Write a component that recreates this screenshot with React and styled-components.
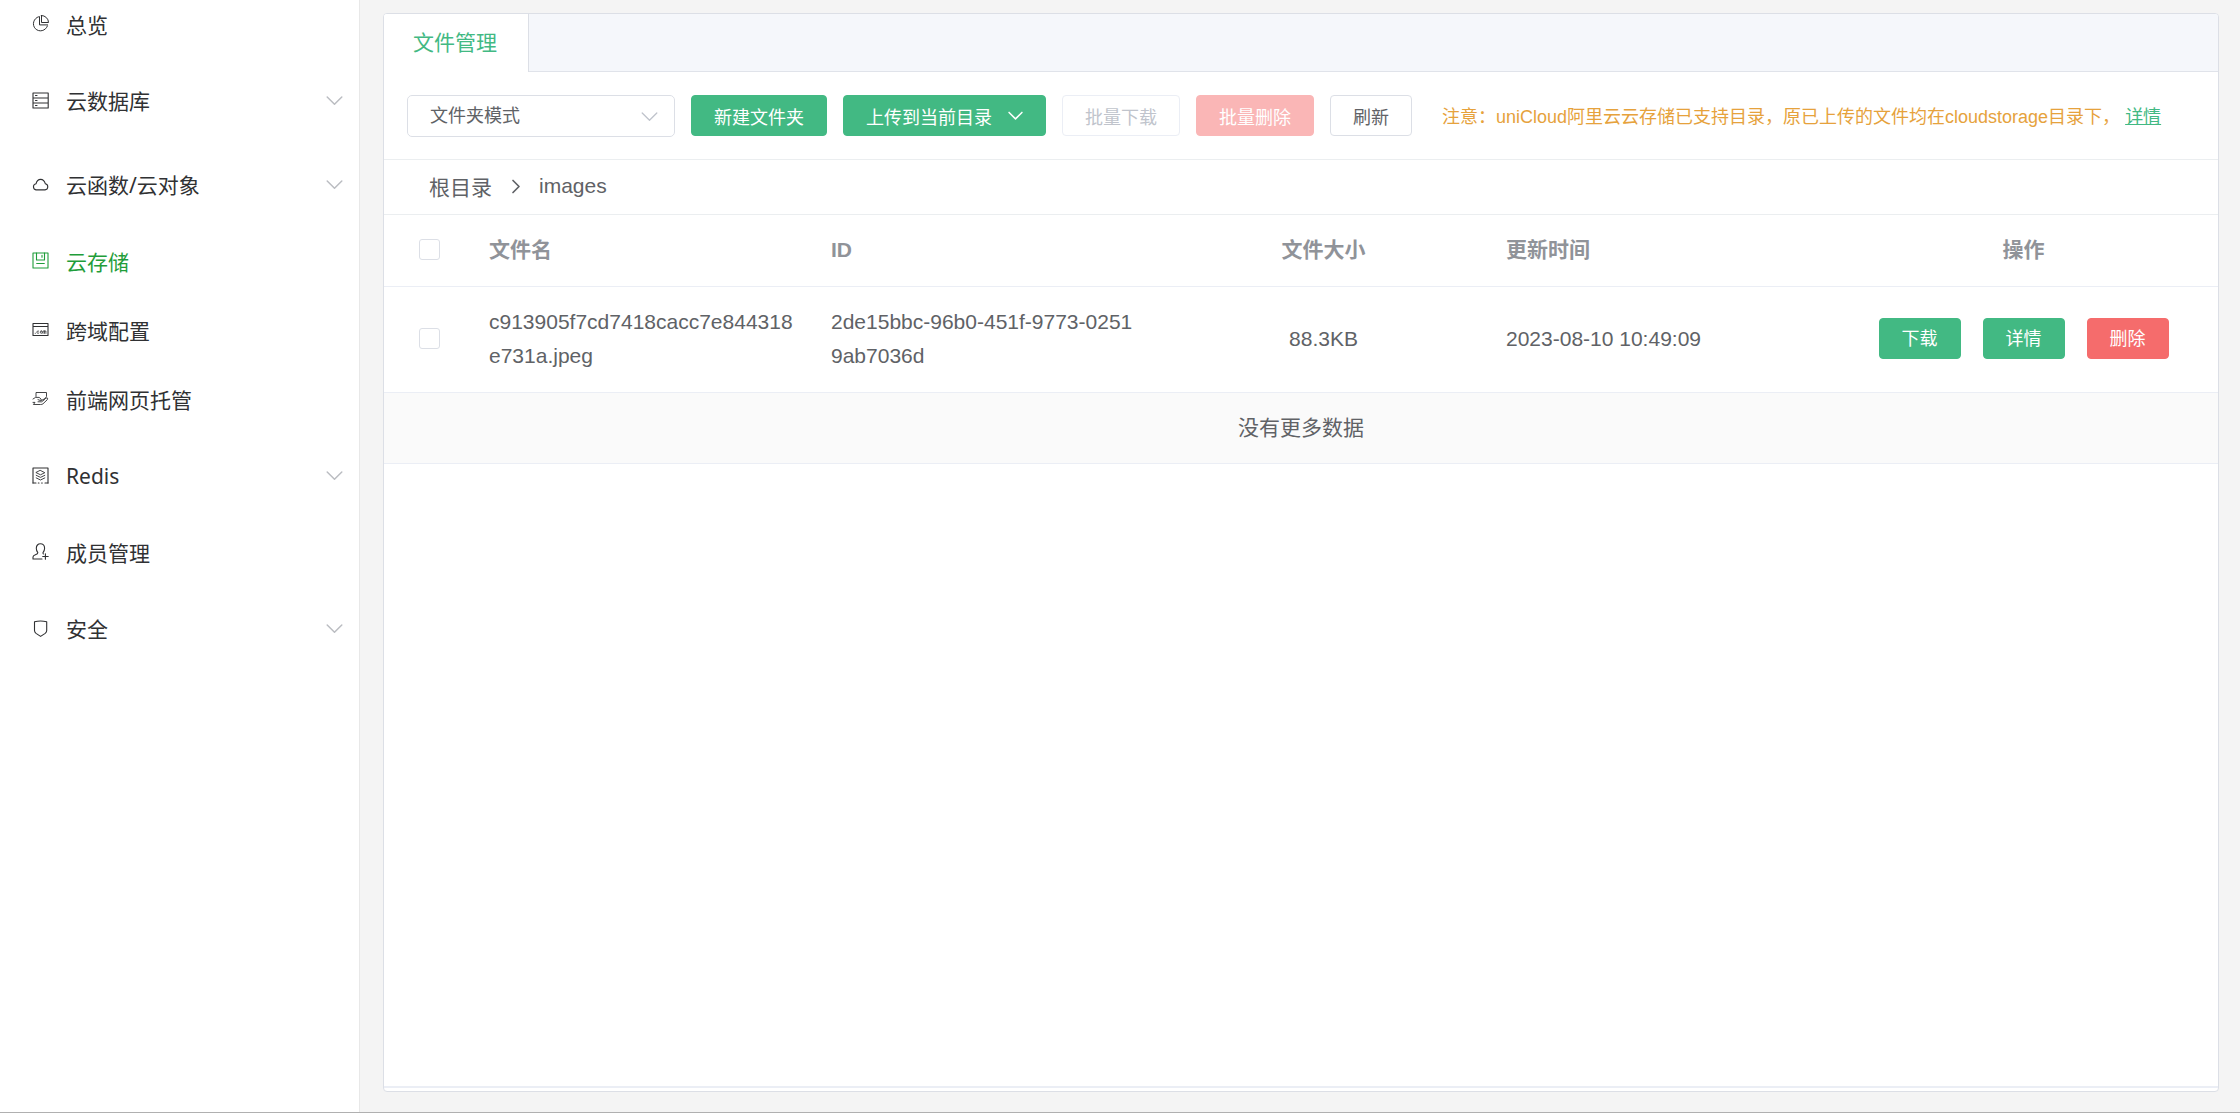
import { useState } from 'react';
import styled, { createGlobalStyle, css } from 'styled-components';

const GlobalStyle = createGlobalStyle`
* {
    box-sizing: border-box;
}
body {
    margin: 0;
    color: #606266;
    background-color: #F4F4F4;
    font-family: "Liberation Sans", "Noto Sans CJK SC", sans-serif;
    font-size: 21px;
}
button, input, select {
    font: inherit;
}
`;

const Layout = styled.div`
display: flex;
min-height: 100vh;
border-bottom: 1px solid #B0B0B0;
`;

const Sidebar = styled.aside`
flex: 0 0 360px;
overflow: hidden;
background-color: white;
border-right: 1px solid #E8E8E8;
font-family: "Noto Sans", "Noto Sans CJK SC", sans-serif;

nav {
    margin-top: -11px;
}
`;

const menuRow = css`
width: 100%;
padding: 0 16px 0 32px;
border: 0;
background: none;
color: ${(p) => (p.$active ? "#1F9D3A" : "#303133")};
display: flex;
align-items: center;
gap: 17px;
text-align: left;
text-decoration: none;
line-height: 30px;
cursor: pointer;

span {
    flex: 1;
    padding-top: 2px;
}
`;

const MenuLink = styled.a`
${menuRow}
height: 69px;
`;

const MenuGroup = styled.button`
${menuRow}
height: 84px;
`;

const Icon = styled.svg`
flex: none;
width: ${(p) => p.$size || 17}px;
height: ${(p) => p.$size || 17}px;
fill: none;
stroke: currentColor;
stroke-width: ${(p) => p.$stroke || 1.1};
stroke-linecap: round;
stroke-linejoin: round;
`;

const Arrow = styled(Icon)`
color: ${(p) => p.$color || "#C0C4CC"};
`;

const Main = styled.main`
flex: 1;
min-width: 0;
padding: 13px 21px 20px 23px;
display: flex;
`;

const Panel = styled.section`
flex: 1;
min-width: 0;
padding-bottom: 3px;
background-color: white;
border: 1px solid #DCDFE6;
border-radius: 4px;
display: flex;
flex-direction: column;
overflow: hidden;
`;

const TabBar = styled.div`
height: 58px;
background-color: #F5F7FB;
border-bottom: 1px solid #E0E3EA;
display: flex;
`;

const Tab = styled.button`
height: 58px;
padding: 0 31px 4px 29px;
border: 0;
border-right: 1px solid #DCDFE6;
background-color: white;
color: #42B983;
cursor: pointer;
`;

const Content = styled.div`
flex: 1;
border-bottom: 2px solid #EBEEF5;
`;

const Toolbar = styled.div`
min-height: 88px;
padding: 0 23px;
border-bottom: 1px solid #EBEEF0;
display: flex;
flex-wrap: wrap;
align-items: center;
gap: 16px;
font-size: 18px;
`;

const SelectBox = styled.div`
position: relative;
width: 268px;
height: 42px;

select {
    width: 100%;
    height: 100%;
    padding: 0 48px 0 22px;
    appearance: none;
    border: 1px solid #DCDFE6;
    border-radius: 5px;
    background-color: white;
    color: #606266;
}
svg {
    position: absolute;
    right: 17px;
    top: 13px;
    pointer-events: none;
}
`;

const tones = {
    plain: ["white", "#606266", "#DCDFE6"],
    success: ["#42B983", "white", "#42B983"],
    danger: ["#F56C6C", "white", "#F56C6C"],
    plainOff: ["white", "#C0C4CC", "#EBEEF5"],
    dangerOff: ["#FAB6B6", "white", "#FAB6B6"],
};

const Button = styled.button`
height: 41px;
padding: 0 22px;
border-radius: 4px;
background-color: ${(p) => tones[p.$tone][0]};
color: ${(p) => tones[p.$tone][1]};
border: 1px solid ${(p) => tones[p.$tone][2]};
display: flex;
align-items: center;
gap: 16px;
font-size: 18px;
white-space: nowrap;
cursor: pointer;

&:disabled {
    cursor: not-allowed;
}
`;

const Notice = styled.p`
margin: 0 0 0 14px;
padding-bottom: 2px;
color: #E6A23C;

a {
    color: #42B983;
}
`;

const Breadcrumb = styled.nav`
height: 55px;
padding: 0 45px 2px;
border-bottom: 1px solid #EBEEF0;
display: flex;
align-items: center;
gap: 15px;

a {
    color: inherit;
    text-decoration: none;
}
`;

const FileTable = styled.table`
width: 100%;
table-layout: fixed;
border-collapse: separate;
border-spacing: 0;

th, td {
    padding: 0 15px 2px;
    border-bottom: 1px solid #EBEEF5;
    text-align: left;
    line-height: 34px;
    word-break: break-all;
}
th {
    height: 72px;
    color: #909399;
    font-weight: 700;
}
td {
    height: 106px;
}
.center { text-align: center; }
.empty {
    height: 71px;
    padding-bottom: 0;
    background-color: #FAFAFA;
    text-align: center;
}
`;

const Checkbox = styled.input`
display: block;
width: 21px;
height: 21px;
margin: 0 auto;
appearance: none;
background-color: white;
border: 1px solid #DCDFE6;
border-radius: 3px;

&:checked {
    background-color: #42B983;
    border-color: #42B983;
}
`;

const Actions = styled.div`
display: flex;
justify-content: center;
gap: 22px;
`;

const icons = {
    overview: (
        <>
            <path strokeWidth="1" d="M6.5 1.8A7.2 7.2 0 1 0 15.4 11" />
            <path strokeWidth="1" d="M9.5 .5V7.5H16.5A7 7 0 0 0 9.5 .5Z" />
            <path strokeWidth="1" d="M7.5 1.7V9.9H15.6" />
        </>
    ),
    database: (
        <>
            <path d="M1 1H16.2V16H1ZM1 6H16.2M1 11H16.2" />
            <path d="M3.5 3.5H5M3.5 8.5H5M3.5 13.5H5" />
        </>
    ),
    cloud: <path d="M4 13.9H13A3.1 3.1 0 0 0 13.4 7.8C12.6 5.3 11 3.4 8.7 3.4C6.3 3.4 4.6 5.4 4 7.8A3.1 3.1 0 0 0 4 13.9Z" />,
    storage: (
        <>
            <path d="M1 1H16V16H1Z" />
            <path d="M4.5 1V8H12.5V1M10 3.3V5.3M4.7 11.5H12.3" />
        </>
    ),
    domain: (
        <>
            <path d="M1 2.5H16V14.5H1ZM1 5.5H16" />
            <path strokeWidth="0.8" d="M3.2 12.3H3.4M6.6 10Q4.8 9.6 4.8 11.2Q4.8 12.7 6.6 12.2M9.3 9.9A1.1 1.2 0 1 0 9.3 12.3A1.1 1.2 0 1 0 9.3 9.9M11 12.4V10H13.9V12.4M12.5 10V12.4" />
        </>
    ),
    hosting: (
        <>
            <path strokeWidth="0.9" d="M4 6.5V2.5H14.5V6.5L12.8 9" />
            <path strokeWidth="0.9" d="M1 9L3.6 7.4H7.2L9.2 9.2Q9.8 10.7 8 10.4L6 9.6M9.5 10.4L14.2 8Q16.5 7.6 15.4 9.6L11 13.8Q10 14.6 8.6 14.5H1.4L3 12.4H1" />
            <path strokeWidth="0.9" d="M6 11.8H9.6L12.5 9.6" />
        </>
    ),
    redis: (
        <>
            <path d="M1 16V1H16V16" />
            <path d="M1 16H4M6.3 16H7M9.6 16H10.3M13 16H16" />
            <path strokeWidth="0.9" d="M8.5 3.5L12.8 5.7L8.5 7.8L4.2 5.7ZM4.2 8.3L8.5 10.4L12.8 8.3M4.2 10.9L8.5 13L12.8 10.9" />
        </>
    ),
    members: (
        <>
            <path d="M10 16H1V14Q1 12.6 3.4 11.7Q5.8 11 5.8 9.7Q4.3 7.7 4.3 5.3C4.3 2.5 6 .8 8.4 .8S12.6 2.5 12.6 5.3Q12.6 7.7 11 9.7Q10.8 10.6 11.4 11" />
            <path d="M13.4 10.8V16.2M10.7 13.5H16.2" />
        </>
    ),
    security: <path d="M2.5 1.8Q8.5 .2 14.7 1.8V10.5Q14.7 12.3 13.2 13.4L8.6 16.4L4 13.4Q2.5 12.3 2.5 10.5Z" />,
};

const menus = [
    { icon: "overview", label: "总览" },
    { icon: "database", label: "云数据库", group: true },
    { icon: "cloud", label: "云函数/云对象", group: true },
    { icon: "storage", label: "云存储", active: true },
    { icon: "domain", label: "跨域配置" },
    { icon: "hosting", label: "前端网页托管" },
    { icon: "redis", label: "Redis", group: true },
    { icon: "members", label: "成员管理" },
    { icon: "security", label: "安全", group: true },
];

const files = [
    {
        name: "c913905f7cd7418cacc7e844318e731a.jpeg",
        id: "2de15bbc-96b0-451f-9773-02519ab7036d",
        size: "88.3KB",
        date: "2023-08-10 10:49:09",
    },
];

function ArrowDown({ color, size, stroke }) {
    return (
        <Arrow viewBox="0 0 17 17" $color={color} $size={size} $stroke={stroke} aria-hidden="true">
            <path d="M1.2 5L8.5 12.3L15.8 5" />
        </Arrow>
    );
}

function Menu({ icon, label, group, active }) {
    const drawing = <Icon viewBox="0 0 17 17" aria-hidden="true">{icons[icon]}</Icon>;

    if (group) {
        return (
            <MenuGroup type="button">
                {drawing}
                <span>{label}</span>
                <ArrowDown color="#BBBDC2" stroke={1.5} />
            </MenuGroup>
        );
    }
    return (
        <MenuLink href="#" $active={active}>
            {drawing}
            <span>{label}</span>
        </MenuLink>
    );
}

function App() {
    const [selected, setSelected] = useState([]);

    const toggle = (id) => {
        setSelected(selected.includes(id) ? selected.filter((s) => s !== id) : [...selected, id]);
    };
    const toggleAll = (e) => setSelected(e.target.checked ? files.map((f) => f.id) : []);
    const none = selected.length === 0;

    return (
        <Layout>
            <GlobalStyle />
            <Sidebar>
                <nav>
                    {menus.map((m) => <Menu key={m.label} {...m} />)}
                </nav>
            </Sidebar>

            <Main>
                <Panel>
                    <TabBar role="tablist">
                        <Tab type="button" role="tab" aria-selected="true">文件管理</Tab>
                    </TabBar>

                    <Content>
                        <Toolbar>
                            <SelectBox>
                                <select aria-label="文件夹模式">
                                    <option>文件夹模式</option>
                                </select>
                                <ArrowDown stroke={1.3} />
                            </SelectBox>
                            <Button type="button" $tone="success">新建文件夹</Button>
                            <Button type="button" $tone="success">
                                上传到当前目录
                                <ArrowDown color="white" size={15} stroke={1.7} />
                            </Button>
                            <Button type="button" disabled={none} $tone={none ? "plainOff" : "plain"}>批量下载</Button>
                            <Button type="button" disabled={none} $tone={none ? "dangerOff" : "danger"}>批量删除</Button>
                            <Button type="button" $tone="plain">刷新</Button>
                            <Notice>
                                注意：uniCloud阿里云云存储已支持目录，原已上传的文件均在cloudstorage目录下， <a href="#">详情</a>
                            </Notice>
                        </Toolbar>

                        <Breadcrumb>
                            <a href="#">根目录</a>
                            <Icon viewBox="0 0 17 17" $stroke={1.7} aria-hidden="true">
                                <path d="M6 2.5L12 8.5L6 14.5" />
                            </Icon>
                            <a href="#">images</a>
                        </Breadcrumb>

                        <FileTable>
                            <colgroup>
                                <col width="90" />
                                <col width="342" />
                                <col width="340" />
                                <col width="335" />
                                <col width="338" />
                                <col width="389" />
                            </colgroup>
                            <thead>
                                <tr>
                                    <th>
                                        <Checkbox
                                            type="checkbox"
                                            aria-label="全选"
                                            checked={selected.length === files.length}
                                            onChange={toggleAll}
                                        />
                                    </th>
                                    <th>文件名</th>
                                    <th>ID</th>
                                    <th className="center">文件大小</th>
                                    <th>更新时间</th>
                                    <th className="center">操作</th>
                                </tr>
                            </thead>
                            <tbody>
                                {files.map((f) => (
                                    <tr key={f.id}>
                                        <td>
                                            <Checkbox
                                                type="checkbox"
                                                aria-label={f.name}
                                                checked={selected.includes(f.id)}
                                                onChange={() => toggle(f.id)}
                                            />
                                        </td>
                                        <td>{f.name}</td>
                                        <td>{f.id}</td>
                                        <td className="center">{f.size}</td>
                                        <td>{f.date}</td>
                                        <td>
                                            <Actions>
                                                <Button type="button" $tone="success">下载</Button>
                                                <Button type="button" $tone="success">详情</Button>
                                                <Button type="button" $tone="danger">删除</Button>
                                            </Actions>
                                        </td>
                                    </tr>
                                ))}
                                <tr>
                                    <td className="empty" colSpan={6}>没有更多数据</td>
                                </tr>
                            </tbody>
                        </FileTable>
                    </Content>
                </Panel>
            </Main>
        </Layout>
    );
}

export default App;
